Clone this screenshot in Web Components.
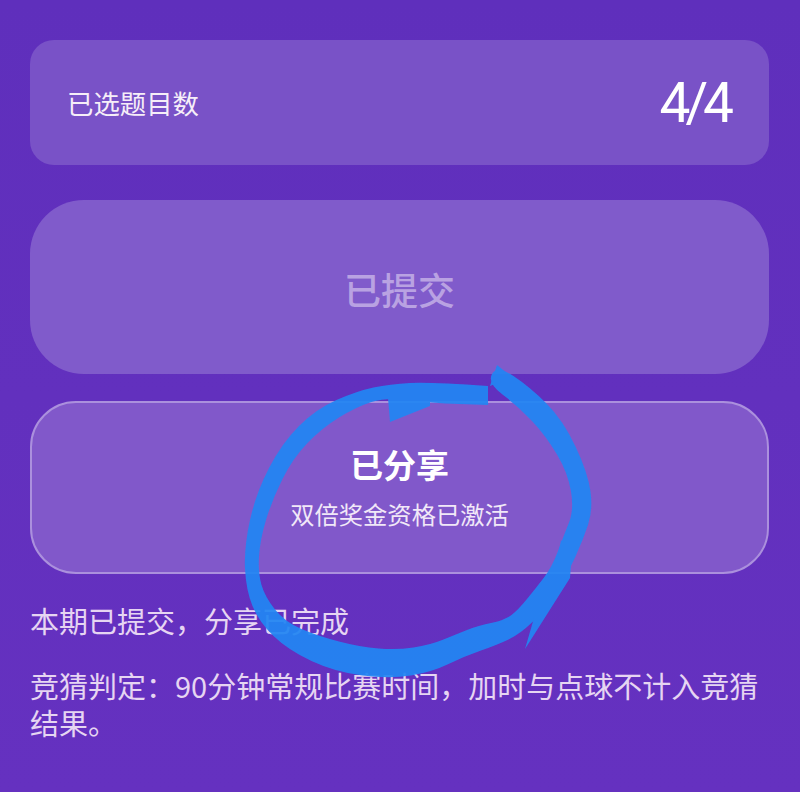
<!DOCTYPE html>
<html lang="zh">
<head>
<meta charset="utf-8">
<title>已分享</title>
<style>
    html, body { margin: 0; height: 100%; }
    body {
        background: linear-gradient(#5f2fbc, #6531c0);
        font-family: "Noto Sans CJK SC", "Liberation Sans", sans-serif;
    }
</style>
</head>
<body>
<quiz-page>
    <count-card label="已选题目数" value="4/4"></count-card>
    <submit-panel>已提交</submit-panel>
    <share-panel title-text="已分享">双倍奖金资格已激活</share-panel>
    <note-text>本期已提交，分享已完成</note-text>
    <note-text>竞猜判定：90分钟常规比赛时间，加时与点球不计入竞猜结果。</note-text>
</quiz-page>
<pen-circle></pen-circle>

<script>
    customElements.define("quiz-page", class QuizPage extends HTMLElement {
        constructor() {
            super();
            this.attachShadow({ mode: "open" }).innerHTML = `
                <style>
                    :host {
                        display: flex;
                        flex-direction: column;
                        box-sizing: border-box;
                        width: 800px;
                        height: 792px;
                        padding: 40px 31px 0 30px;
                        overflow: hidden;
                    }
                </style>
                <slot></slot>`;
        }
    });

    customElements.define("count-card", class CountCard extends HTMLElement {
        constructor() {
            super();
            this.attachShadow({ mode: "open" }).innerHTML = `
                <style>
                    :host {
                        display: flex;
                        align-items: center;
                        justify-content: space-between;
                        box-sizing: border-box;
                        height: 125px;
                        padding: 0 40px 0 37px;
                        border-radius: 24px;
                        background: #7952c7;
                        color: #f6eef8;
                    }
                    .label { font-size: 26.4px; line-height: 36px; font-weight: 400; }
                    .value {
                        font-family: "Roboto", "Liberation Sans", sans-serif;
                        font-size: 55px;
                        line-height: 60px;
                        font-weight: 400;
                        letter-spacing: -5px;
                        color: #fff;
                    }
                </style>
                <span class="label"></span>
                <span class="value"></span>`;
            this.shadowRoot.querySelector(".label").textContent = this.getAttribute("label");
            this.shadowRoot.querySelector(".value").textContent = this.getAttribute("value");
        }
    });

    customElements.define("submit-panel", class SubmitPanel extends HTMLElement {
        constructor() {
            super();
            this.attachShadow({ mode: "open" }).innerHTML = `
                <style>
                    :host {
                        display: flex;
                        align-items: center;
                        justify-content: center;
                        box-sizing: border-box;
                        height: 174px;
                        margin-top: 35px;
                        padding-top: 3px;
                        border-radius: 54px;
                        background: #805bcb;
                        color: #b9a2e2;
                        font-size: 37px;
                        font-weight: 500;
                    }
                </style>
                <slot></slot>`;
        }
    });

    customElements.define("share-panel", class SharePanel extends HTMLElement {
        constructor() {
            super();
            this.attachShadow({ mode: "open" }).innerHTML = `
                <style>
                    :host {
                        display: flex;
                        flex-direction: column;
                        align-items: center;
                        box-sizing: border-box;
                        height: 173px;
                        margin-top: 27px;
                        padding-top: 38px;
                        border: 2px solid #ab90dd;
                        border-radius: 46px;
                        background: #8158ca;
                        color: #fff;
                    }
                    .title { font-size: 33px; line-height: 46px; font-weight: 700; }
                    .sub { margin-top: 10px; font-size: 24.3px; line-height: 34px; font-weight: 400; color: #f1e8f8; }
                </style>
                <span class="title"></span>
                <span class="sub"><slot></slot></span>`;
            this.shadowRoot.querySelector(".title").textContent = this.getAttribute("title-text");
        }
    });

    customElements.define("note-text", class NoteText extends HTMLElement {
        constructor() {
            super();
            this.attachShadow({ mode: "open" }).innerHTML = `
                <style>
                    :host {
                        display: block;
                        margin-top: 28px;
                        font-size: 29px;
                        line-height: 37px;
                        font-weight: 400;
                        color: #e6d5f2;
                    }
                </style>
                <slot></slot>`;
        }
    });

    // goes through the midpoints, so the outline comes out round
    function smooth(points) {
        let d = "M" + points[0].join(" ");
        for (let i = 1; i < points.length - 1; i++) {
            const mx = (points[i][0] + points[i + 1][0]) / 2;
            const my = (points[i][1] + points[i + 1][1]) / 2;
            d += ` Q${points[i][0]} ${points[i][1]} ${mx} ${my}`;
        }
        return d + " L" + points[points.length - 1].join(" ") + " Z";
    }

    const band = [
        [488,386],[430,382],[390,384],[357,391],[316,409],[282,443],[256,493],[244,547],[246,590],
        [259,622],[288,650],[335,672],[390,679],[432,672],[465,656],[497,645],[520,634],[545,610],
        [568,573],[583,540],[593,510],[588,473],[563,420],[530,387],[497,365],
        [487,383],[518,406],[546,436],[568,473],[574,510],[564,535],[552,567],[536,588],[518,610],
        [505,620],[477,626],[457,634],[430,645],[397,650],[360,647],[318,636],[285,622],[265,597],
        [258,573],[260,540],[272,500],[293,458],[322,428],[356,407],[387,397],[430,403],[488,405]
    ];

    // the hand drawn circle lies over everything, it is a free canvas
    customElements.define("pen-circle", class PenCircle extends HTMLElement {
        constructor() {
            super();
            this.attachShadow({ mode: "open" }).innerHTML = `
                <style>
                    :host { position: absolute; left: 0; top: 0; width: 800px; height: 792px; pointer-events: none; }
                    svg { display: block; }
                </style>
                <svg width="800" height="792" viewBox="0 0 800 792">
                    <defs><filter id="soft"><feGaussianBlur stdDeviation="0.7"/></filter></defs>
                    <g fill="#2386f3" opacity="0.93" filter="url(#soft)">
                        <path d="${smooth(band)}"/>
                        <path d="M497 365 L512 377 L490 386 Z"/>
                        <path d="M388 398 L390 422 L430 406 L430 400 Z"/>
                        <path d="M561 540 L572 552 L570 578 L525 649 L534 618 L548 590 L556 566 Z"/>
                    </g>
                </svg>`;
        }
    });
</script>
</body>
</html>
